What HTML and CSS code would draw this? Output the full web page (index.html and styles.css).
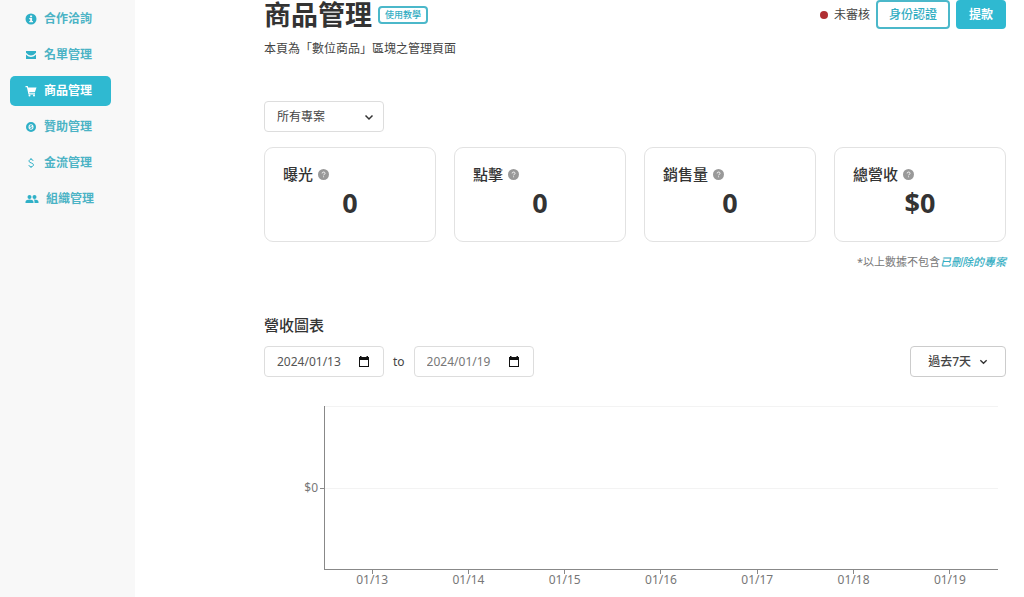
FILE: index.html
```html
<!DOCTYPE html>
<html lang="zh-Hant">
<head>
<meta charset="utf-8">
<title>商品管理</title>
<link rel="stylesheet" href="styles.css">
</head>
<body>
<div class="layout">
  <nav class="sidebar">
    <a class="nav-item" href="#"><svg class="nav-icon" viewBox="0 0 24 24"><path fill-rule="evenodd" d="M12 1a11 11 0 1 0 0 22a11 11 0 0 0 0-22zM10.2 5h4v3.600h-4zM8.500 10h5.700v6h1.800v2.500H8.500V16h1.800v-3.500H8.500z"/></svg>合作洽詢</a>
    <a class="nav-item" href="#"><svg class="nav-icon" viewBox="0 0 24 24"><path d="M2 4h20v3.500c-4 4-7 5.500-10 5.500S6 11.500 2 7.500zM2 11c4 3.500 7 5 10 5s6-1.500 10-5v9H2z"/></svg>名單管理</a>
    <a class="nav-item nav-item-active" href="#" aria-current="page"><svg class="nav-icon" viewBox="0 0 24 24"><path d="M1 2h4.500l.8 3H23l-3.200 9.500H8.500l.5 2h11V19H7L3.800 4.500H1z"/><circle cx="9" cy="21" r="2"/><circle cx="18" cy="21" r="2"/></svg>商品管理</a>
    <a class="nav-item" href="#"><svg class="nav-icon" viewBox="0 0 24 24"><path fill-rule="evenodd" d="M12 2a10 10 0 1 0 0 20a10 10 0 0 0 0-20zM12 6.500a5 5.500 0 1 1 0 11a5 5.500 0 0 1 0-11z"/><path class="nav-stroke" d="M14 9.800c-1-1-4-1-4 .5c0 1.800 4 1.400 4 3.200c0 1.800-3 1.800-4.300.6"/></svg>贊助管理</a>
    <a class="nav-item" href="#"><svg class="nav-icon" viewBox="0 0 24 24"><path class="nav-stroke" d="M16.500 8c-.8-4-8.500-4-8.500.2c0 4.500 9 2.800 9 7.600c0 4.500-9 4.500-9.500.2M12 2v3M12 19v3"/></svg>金流管理</a>
    <a class="nav-item" href="#"><svg class="nav-icon nav-icon-wide" viewBox="0 0 28 24"><circle cx="9" cy="8" r="4"/><circle cx="19" cy="8" r="4"/><path d="M1 20v-2.500c0-3 5-4.500 8-4.500s8 1.500 8 4.500V20zM19 20v-3c0-1.500-.7-2.800-1.800-3.800c4-.5 9.800 1 9.800 4.300V20z"/></svg>組織管理</a>
  </nav>

  <main class="content">
    <header class="page-header">
      <h1 class="page-title">商品管理</h1>
      <button class="tutorial-button" type="button">使用教學</button>
      <div class="account">
        <span class="status"><span class="status-dot"></span>未審核</span>
        <button class="button button-outline" type="button">身份認證</button>
        <button class="button button-solid" type="button">提款</button>
      </div>
    </header>
    <p class="page-description">本頁為「數位商品」區塊之管理頁面</p>

    <div class="select-box project-filter">
      <select class="select" aria-label="專案"><option>所有專案</option></select>
      <svg class="chevron" viewBox="0 0 10 10"><path d="M1.500 3.500L5 7l3.500-3.500"/></svg>
    </div>

    <section class="stats">
      <article class="card">
        <h2 class="card-title">曝光<svg class="help" viewBox="0 0 12 12"><circle cx="6" cy="6" r="6"/><path d="M4.500 4.800c0-2 3.200-1.900 3.200-.1c0 1.100-1.600 1.100-1.600 2.200M6.100 8v1"/></svg></h2>
        <p class="card-value">0</p>
      </article>
      <article class="card">
        <h2 class="card-title">點擊<svg class="help" viewBox="0 0 12 12"><circle cx="6" cy="6" r="6"/><path d="M4.500 4.800c0-2 3.200-1.900 3.200-.1c0 1.100-1.600 1.100-1.600 2.200M6.100 8v1"/></svg></h2>
        <p class="card-value">0</p>
      </article>
      <article class="card">
        <h2 class="card-title">銷售量<svg class="help" viewBox="0 0 12 12"><circle cx="6" cy="6" r="6"/><path d="M4.500 4.800c0-2 3.200-1.900 3.200-.1c0 1.100-1.600 1.100-1.600 2.200M6.100 8v1"/></svg></h2>
        <p class="card-value">0</p>
      </article>
      <article class="card">
        <h2 class="card-title">總營收<svg class="help" viewBox="0 0 12 12"><circle cx="6" cy="6" r="6"/><path d="M4.500 4.800c0-2 3.200-1.900 3.200-.1c0 1.100-1.600 1.100-1.600 2.200M6.100 8v1"/></svg></h2>
        <p class="card-value">$0</p>
      </article>
    </section>
    <p class="note">*以上數據不包含<a class="note-link" href="#">已刪除的專案</a></p>

    <h2 class="section-title">營收圖表</h2>
    <div class="range">
      <label class="date-box"><input class="date-input" type="text" value="2024/01/13" aria-label="開始日期"><svg class="calendar" viewBox="0 0 12 12"><path fill-rule="evenodd" d="M2 0h1.500v1h5V0H10v1h1v10H1V1h1zM2 4v6h8V4z"/></svg></label>
      <span class="range-to">to</span>
      <label class="date-box"><input class="date-input date-input-muted" type="text" value="2024/01/19" aria-label="結束日期"><svg class="calendar" viewBox="0 0 12 12"><path fill-rule="evenodd" d="M2 0h1.500v1h5V0H10v1h1v10H1V1h1zM2 4v6h8V4z"/></svg></label>
      <button class="period-button" type="button">過去7天<svg class="chevron-small" viewBox="0 0 10 10"><path d="M1.500 3.500L5 7l3.500-3.500"/></svg></button>
    </div>

    <figure class="chart">
      <div class="y-axis"><span>$0</span><span class="y-tick"></span></div>
      <div class="plot"><div class="plot-band"></div><div class="plot-band"></div></div>
      <div class="x-axis">
        <span class="x-label">01/13</span><span class="x-label">01/14</span><span class="x-label">01/15</span><span class="x-label">01/16</span><span class="x-label">01/17</span><span class="x-label">01/18</span><span class="x-label">01/19</span>
      </div>
    </figure>
  </main>
</div>
</body>
</html>
```
FILE: styles.css
```css
* { box-sizing: border-box; }

body {
  margin: 0;
  background: #fff;
  color: #444;
  font: 12px/18px "Noto Sans", "Noto Sans CJK TC", sans-serif;
}

h1, h2, p, figure { margin: 0; }

button, input, select {
  font: inherit;
  color: inherit;
}

.layout {
  display: flex;
  min-height: 100vh;
}

.sidebar {
  flex: 0 0 135px;
  display: flex;
  flex-direction: column;
  gap: 6px;
  padding: 4px 24px 0 10px;
  background: #f8f8f8;
}

.nav-item {
  display: flex;
  align-items: center;
  gap: 7px;
  height: 30px;
  padding-left: 15px;
  border-radius: 5px;
  color: #4bb3c5;
  font-weight: 700;
  text-decoration: none;
}

.nav-item-active {
  background: #2fb9d1;
  color: #fff;
}

.nav-icon {
  width: 12px;
  height: 12px;
  fill: #2fb0c7;
}

.nav-item-active .nav-icon { fill: #fff; }

.nav-icon-wide { width: 14px; }

.nav-stroke {
  fill: none;
  stroke: #2fb0c7;
  stroke-width: 2;
}

.content {
  flex: 1;
  min-width: 0;
  padding: 0 18px 0 129px;
}

.page-header {
  display: flex;
  align-items: center;
  height: 29px;
}

.page-title {
  color: #333;
  font-size: 27px;
  line-height: 28px;
  font-weight: 700;
}

.tutorial-button {
  height: 18px;
  margin-left: 6px;
  padding: 0 5px;
  border: 2px solid #4bb8ca;
  border-radius: 4px;
  background: #fff;
  color: #35aec3;
  font-size: 9px;
  line-height: 12px;
  font-weight: 500;
}

.account {
  display: flex;
  align-items: center;
  gap: 6px;
  margin-left: auto;
}

.status {
  display: flex;
  align-items: center;
  gap: 6px;
}

.status-dot {
  width: 8px;
  height: 8px;
  border-radius: 50%;
  background: #b02f33;
}

.button {
  height: 29px;
  border-radius: 4px;
  padding: 0 11px;
  border: 2px solid #2fb9d1;
}

.button-outline {
  border-color: #4bb8ca;
  background: #fff;
  color: #35aec3;
  font-weight: 500;
}

.button-solid {
  background: #2fb9d1;
  color: #fff;
  font-weight: 700;
}

.page-description { margin-top: 11px; }

.select-box {
  display: grid;
  align-items: center;
  width: 120px;
}

.select-box > * { grid-area: 1 / 1; }

.project-filter { margin-top: 43px; }

.select {
  width: 100%;
  height: 31px;
  padding: 0 12px;
  border: 1px solid #ddd;
  border-radius: 4px;
  background: #fff;
  appearance: none;
}

.chevron {
  width: 10px;
  height: 10px;
  margin-right: 10px;
  justify-self: end;
  pointer-events: none;
}

.chevron path, .chevron-small path {
  fill: none;
  stroke: #333;
  stroke-width: 1.500;
}

.stats {
  display: grid;
  grid-template-columns: repeat(4, 1fr);
  gap: 18px;
  margin-top: 15px;
}

.card {
  padding: 15px 18px 20px;
  border: 1px solid #e2e2e2;
  border-radius: 9px;
}

.card-title {
  display: flex;
  align-items: center;
  gap: 5px;
  color: #333;
  font-size: 15px;
  line-height: 22px;
  font-weight: 500;
}

.help {
  width: 11px;
  height: 11px;
}

.help circle { fill: #999; }

.help path {
  fill: none;
  stroke: #fff;
  stroke-width: 1;
}

.card-value {
  color: #333;
  font-size: 27px;
  line-height: 36px;
  font-weight: 700;
  text-align: center;
}

.note {
  margin-top: 11px;
  font-size: 11px;
  color: #777;
  text-align: right;
}

.note-link {
  color: #35aec3;
  font-style: italic;
  font-weight: 500;
  text-decoration: none;
}

.section-title {
  margin-top: 43px;
  color: #333;
  font-size: 15px;
  line-height: 22px;
  font-weight: 500;
}

.range {
  display: flex;
  align-items: center;
  margin-top: 10px;
}

.date-box {
  display: flex;
  align-items: center;
  justify-content: space-between;
  width: 120px;
  height: 31px;
  padding: 0 13px 0 12px;
  border: 1px solid #ddd;
  border-radius: 4px;
}

.date-input {
  width: 72px;
  padding: 0;
  border: 0;
  background: none;
  color: #555;
}

.date-input-muted { color: #777; }

.calendar {
  width: 12px;
  height: 12px;
  fill: #111;
}

.range-to { margin: 0 9px; }

.period-button {
  display: flex;
  align-items: center;
  gap: 8px;
  height: 31px;
  margin-left: auto;
  padding: 0 17px;
  border: 1px solid #ccc;
  border-radius: 4px;
  background: #fff;
  font-weight: 500;
}

.chevron-small {
  width: 9px;
  height: 9px;
}

.chart {
  display: grid;
  grid-template-columns: 60px 1fr;
  margin: 29px 8px 0 0;
  color: #777;
}

.y-axis {
  display: flex;
  align-items: center;
  justify-content: flex-end;
  gap: 2px;
}

.y-tick {
  width: 4px;
  height: 1px;
  background: #888;
}

.plot {
  display: grid;
  grid-template-rows: 1fr 1fr;
  height: 164px;
  border-left: 1px solid #888;
  border-bottom: 1px solid #888;
}

.plot-band { border-top: 1px solid #f3f3f3; }

.x-axis {
  grid-column: 2;
  display: grid;
  grid-template-columns: repeat(7, 1fr);
}

.x-label {
  display: flex;
  flex-direction: column;
  align-items: center;
  line-height: 12px;
}

.x-label::before {
  content: "";
  width: 1px;
  height: 4px;
  background: #888;
}
```
